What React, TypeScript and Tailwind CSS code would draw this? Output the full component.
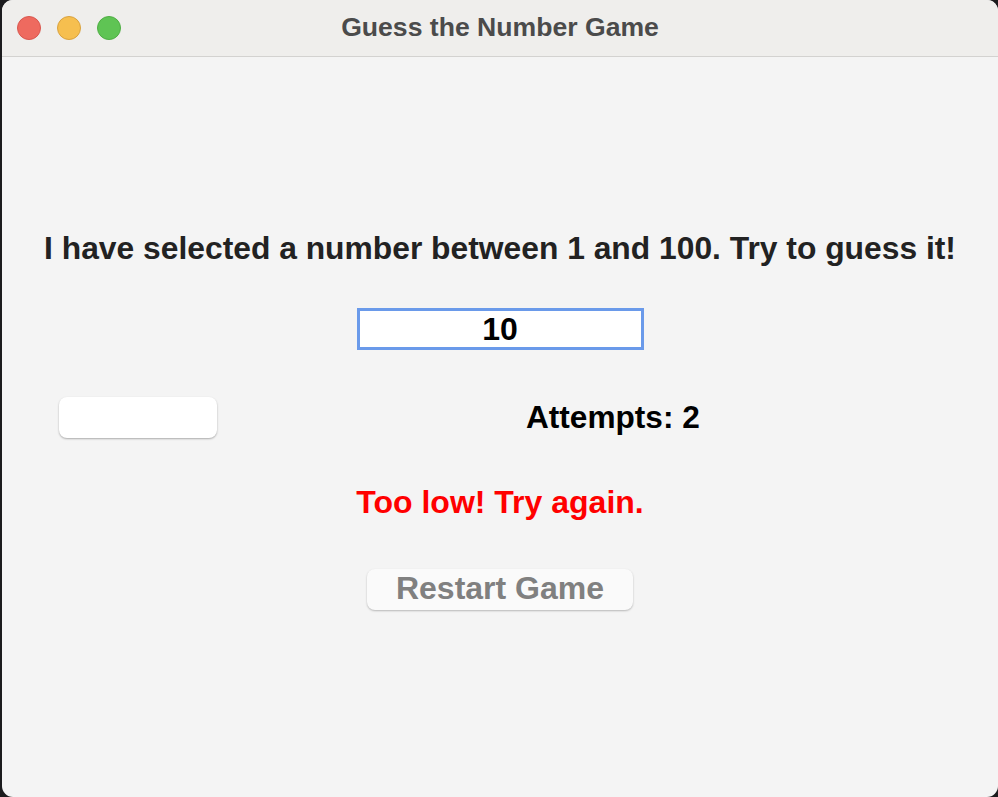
export default function App() {
  return (
    <div
      className="h-[797px] w-[998px] overflow-hidden bg-[#1b1b1d] pl-[2px]"
      style={{ fontFamily: '"Liberation Sans", Arial, sans-serif' }}
    >
      <div className="flex h-full flex-col overflow-hidden rounded-[11px] bg-[#f4f4f4]">
        {/* title bar */}
        <div className="relative flex h-[57px] shrink-0 items-center justify-center border-b border-[#d3d2d0] bg-[#efeeec]">
          <div className="absolute left-[15px] top-[16px] flex gap-[16px]">
            <span className="h-[24px] w-[24px] rounded-full border border-[#d9574f] bg-[#ee6a5f]" />
            <span className="h-[24px] w-[24px] rounded-full border border-[#d9a23f] bg-[#f6bf4f]" />
            <span className="h-[24px] w-[24px] rounded-full border border-[#4fae44] bg-[#5fc454]" />
          </div>
          <span className="text-[26.6px] font-bold text-[#4b4b4b]">Guess the Number Game</span>
        </div>

        {/* content */}
        <div className="flex flex-col items-center">
          <h1 className="mt-[172px] text-[31.8px] font-bold leading-[38px] text-[#222222]">
            I have selected a number between 1 and 100. Try to guess it!
          </h1>

          <div className="mt-[41px] flex h-[42px] w-[287px] items-center justify-center border-[3px] border-[#6a9aea] bg-white text-[32px] font-bold leading-[36px] text-black">
            10
          </div>

          <div className="mt-[47px] flex h-[41px] w-full items-center">
            <div className="ml-[57px] h-[41px] w-[158px] rounded-[8px] bg-white shadow-[0_1px_2px_rgba(0,0,0,0.3)]" />
            <div className="ml-[309px] text-[31.6px] font-bold text-black">Attempts: 2</div>
          </div>

          <div className="mt-[45px] text-[32px] font-bold leading-[38px] text-[#ff0000]">
            Too low! Try again.
          </div>

          <button className="mt-[48px] flex h-[41px] w-[266px] items-center justify-center rounded-[8px] bg-[#fafafa] pb-[4px] text-[32px] font-bold leading-[36px] text-[#808080] shadow-[0_1px_2px_rgba(0,0,0,0.25)]">
            Restart Game
          </button>
        </div>
      </div>
    </div>
  );
}
